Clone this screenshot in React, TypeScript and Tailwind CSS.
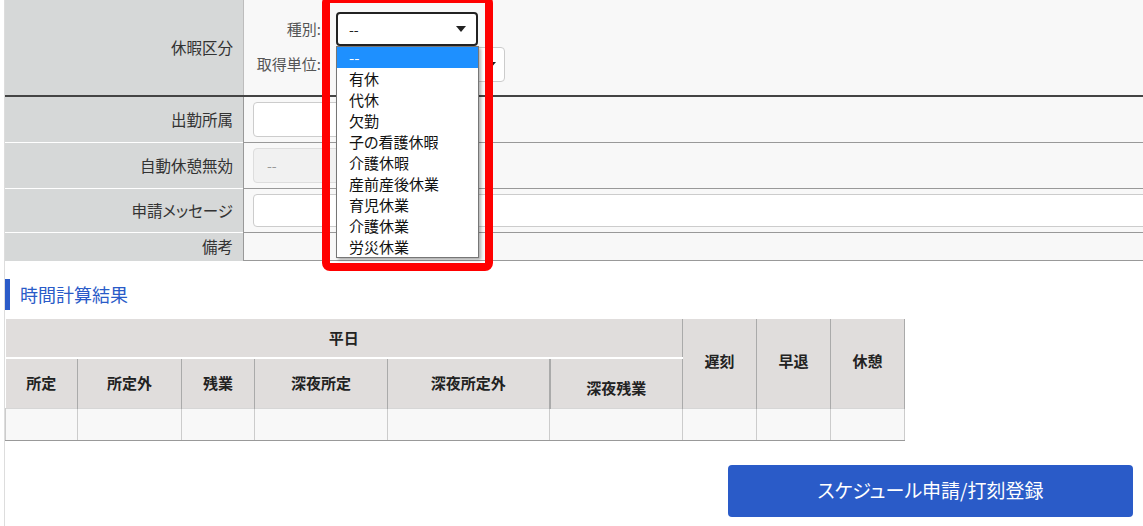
import React from "react";

const leaveTypes = [
  "--",
  "有休",
  "代休",
  "欠勤",
  "子の看護休暇",
  "介護休暇",
  "産前産後休業",
  "育児休業",
  "介護休業",
  "労災休業",
];

const subCols = [
  { label: "所定", w: "w-[72px]" },
  { label: "所定外", w: "w-[104px]" },
  { label: "残業", w: "w-[73px]" },
  { label: "深夜所定", w: "w-[133px]" },
  { label: "深夜所定外", w: "w-[162px]" },
  { label: "深夜残業", w: "w-[133px]" },
];

const sideCols = ["遅刻", "早退", "休憩"];

function Caret({ className = "" }: { className?: string }) {
  return (
    <svg width="10" height="6" viewBox="0 0 10 6" className={className}>
      <polygon points="0,0 10,0 5,6" fill="#222" />
    </svg>
  );
}

function FormRow({
  label,
  rowClass,
  labelClass = "",
  children,
}: {
  label: string;
  rowClass: string;
  labelClass?: string;
  children?: React.ReactNode;
}) {
  return (
    <div className={`flex ${rowClass}`}>
      <div
        className={`w-[238px] shrink-0 bg-[#d6d8d8] flex items-center justify-end pr-[10px] text-[15.5px] text-[#333] ${labelClass}`}
      >
        {label}
      </div>
      <div className="flex-1 min-w-0 bg-[#f8f8f8] border-l border-[#bdbdbd] overflow-hidden flex items-center pl-[9px]">
        {children}
      </div>
    </div>
  );
}

export default function App() {
  return (
    <div className="relative w-[1143px] h-[526px] overflow-hidden bg-white font-['Noto_Sans_CJK_JP','Noto_Sans',sans-serif] [font-feature-settings:'palt'] text-[#333]">
      <div className="ml-[4px] border-l border-[#dddddd] h-full">
        {/* 休暇区分 */}
        <div className="flex h-[97px] border-b-2 border-[#444]">
          <div className="w-[238px] shrink-0 bg-[#d6d8d8] flex items-center justify-end pr-[10px] text-[15.5px] text-[#333]">
            休暇区分
          </div>
          <div className="flex-1 bg-[#f8f8f8] border-l border-[#bdbdbd] pl-[9px] pt-[12px]">
            <div className="grid grid-cols-[68px_auto] gap-x-[15px] gap-y-[1px] items-center justify-start">
              <div className="text-right text-[15px] text-[#555]">種別:</div>
              <div className="w-[142px] h-[34px] bg-white border-2 border-[#222] rounded-[4px] flex items-center justify-between pl-[11px] pr-[10px] text-[14px] text-[#222]">
                <span>--</span>
                <Caret />
              </div>
              <div className="text-right text-[15px] text-[#555]">取得単位:</div>
              <div className="w-[169px] h-[35px] bg-white border border-[#cccccc] rounded-[4px] flex items-center justify-end pr-[8px]">
                <Caret />
              </div>
            </div>
          </div>
        </div>

        <FormRow label="出勤所属" rowClass="h-[46px] [&>div:first-child]:border-b [&>div:first-child]:border-white [&>div:last-child]:border-b [&>div:last-child]:border-[#999]">
          <div className="w-[220px] h-[35px] bg-white border border-[#cccccc] rounded-[4px]" />
        </FormRow>

        <FormRow label="自動休憩無効" rowClass="h-[46px] [&>div:first-child]:border-b [&>div:first-child]:border-white [&>div:last-child]:border-b [&>div:last-child]:border-[#999]">
          <div className="w-[220px] h-[35px] bg-[#f1f1f1] border border-[#dddddd] rounded-[4px] flex items-center pl-[13px] text-[14px] text-[#999]">
            --
          </div>
        </FormRow>

        <FormRow label="申請メッセージ" rowClass="h-[44px] [&>div:first-child]:border-b [&>div:first-child]:border-white [&>div:last-child]:border-b [&>div:last-child]:border-[#999]">
          <div className="w-[920px] shrink-0 h-[33px] bg-white border border-[#cccccc] rounded-[4px]" />
        </FormRow>

        <FormRow label="備考" rowClass="h-[28px] [&>div:last-child]:border-b [&>div:last-child]:border-[#999]" />

        {/* 時間計算結果 */}
        <div className="mt-[18px] flex items-center h-[31px]">
          <div className="w-[5px] h-full bg-[#2a5bc8]" />
          <div className="ml-[10px] text-[18px] text-[#2a5bc8]">時間計算結果</div>
        </div>

        <table className="mt-[9px] border-collapse text-[15px] font-bold text-[#222]">
          <thead>
            <tr className="h-[39px]">
              <th
                colSpan={6}
                className="bg-[#e0dddc] border-b-2 border-white border-r border-r-[#aaa] font-bold"
              >
                平日
              </th>
              {sideCols.map((c) => (
                <th
                  key={c}
                  rowSpan={2}
                  className="w-[74px] bg-[#e0dddc] border-r border-[#aaa] align-middle font-bold pb-[5px]"
                >
                  {c}
                </th>
              ))}
            </tr>
            <tr className="h-[50px]">
              {subCols.map((c, i) => (
                <th
                  key={c.label}
                  className={`${c.w} bg-[#e0dddc] border-[#aaa] font-bold ${
                    i === 4 ? "border-r-2" : "border-r"
                  } ${i === 5 ? "pt-[10px]" : ""}`}
                >
                  {c.label}
                </th>
              ))}
            </tr>
          </thead>
          <tbody>
            <tr className="h-[32px]">
              {[...subCols.map((c) => c.label), ...sideCols].map((c, i) => (
                <td
                  key={c}
                  className={`bg-[#f8f8f8] border-t border-[#d6d6d6] border-b border-b-[#999] border-r border-r-[#cccccc] ${
                    i === 0 ? "border-l border-l-[#cccccc]" : ""
                  }`}
                />
              ))}
            </tr>
          </tbody>
        </table>

        <div className="flex justify-end pr-[10px] mt-[24px]">
          <button className="w-[405px] h-[52px] rounded-[4px] bg-[#2a5bc8] text-white text-[19px] font-normal">
            スケジュール申請/打刻登録
          </button>
        </div>
      </div>

      {/* open dropdown list */}
      <div className="absolute left-[336px] top-[46px] w-[143px] bg-white border border-[#767676] shadow-[2px_2px_3px_rgba(0,0,0,0.3)]">
        {leaveTypes.map((t, i) => (
          <div
            key={t}
            className={`h-[21px] leading-[21px] pl-[12px] text-[15px] ${
              i === 0 ? "bg-[#1e90ff] text-white" : "text-[#111]"
            }`}
          >
            {t}
          </div>
        ))}
      </div>

      {/* highlight frame */}
      <div className="absolute left-[322px] top-[-5px] w-[171px] h-[276px] border-8 border-[#ff0000] rounded-[8px] pointer-events-none" />
    </div>
  );
}
